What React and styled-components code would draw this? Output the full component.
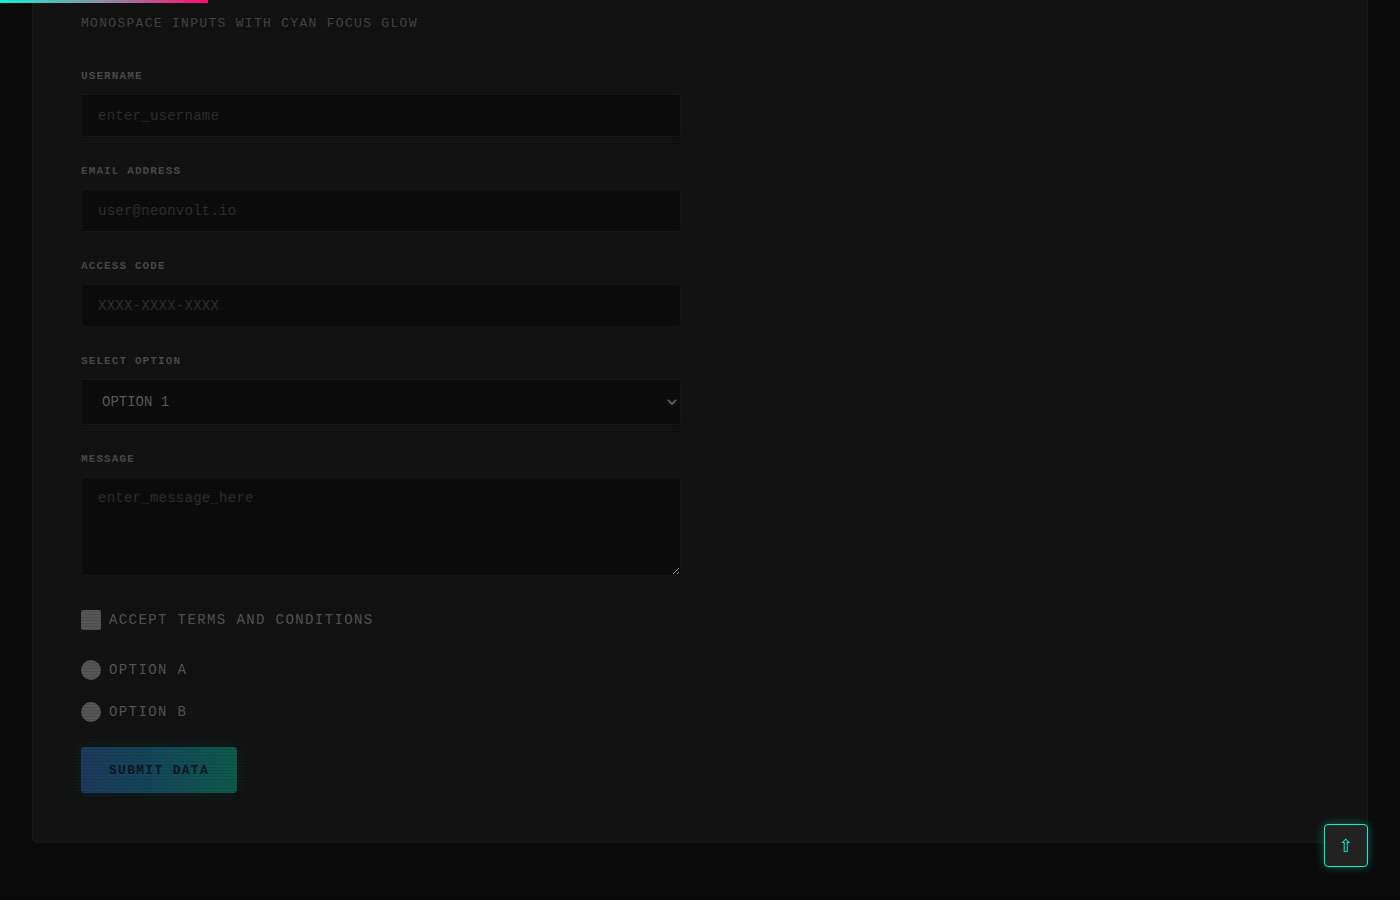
import React from "react";
import styled, { createGlobalStyle } from "styled-components";

const GlobalStyle = createGlobalStyle`
  html, body {
    margin: 0;
    padding: 0;
    background: #0b0b0b;
  }
  body {
    font-family: "Liberation Mono", "DejaVu Sans Mono", monospace;
  }
`;

const Scanlines = styled.div`
  position: fixed;
  inset: 0;
  pointer-events: none;
  z-index: 5;
  background: repeating-linear-gradient(
    0deg,
    rgba(0, 0, 0, 0.1) 0px,
    rgba(0, 0, 0, 0.1) 1px,
    transparent 1px,
    transparent 3px
  );
`;

const ProgressBar = styled.div`
  position: fixed;
  top: 0;
  left: 0;
  height: 3px;
  width: 208px;
  z-index: 10;
  background: linear-gradient(90deg, #12f0cc 0%, #8d8fa6 50%, #ff0a6c 100%);
`;

const Page = styled.div`
  padding: 0 32px 58px;
`;

const Card = styled.section`
  background: #121212;
  border: 1px solid #1a1a1a;
  border-top: none;
  border-radius: 0 0 6px 6px;
  padding: 16px 48px 49px;
`;

const Subtitle = styled.p`
  margin: 0 0 38px;
  font-size: 13px;
  line-height: 16px;
  letter-spacing: 0.1em;
  color: #454545;
  text-transform: uppercase;
`;

const Form = styled.form`
  max-width: 600px;
  display: flex;
  flex-direction: column;
`;

const Field = styled.div`
  display: flex;
  flex-direction: column;
  margin-bottom: ${(p) => (p.$last ? 0 : 28)}px;
`;

const Label = styled.label`
  font-size: 11px;
  line-height: 13px;
  font-weight: 700;
  letter-spacing: 0.1em;
  color: #4a4a4a;
  text-transform: uppercase;
  margin-bottom: 11px;
`;

const inputBase = `
  box-sizing: border-box;
  width: 100%;
  background: #0c0c0c;
  border: 1px solid #161616;
  border-radius: 3px;
  color: #5a5a5a;
  font-family: "Liberation Mono", "DejaVu Sans Mono", monospace;
  font-size: 14px;
  letter-spacing: 0.25px;
  outline: none;
  &::placeholder {
    color: #2e2e2e;
  }
`;

const Input = styled.input`
  ${inputBase}
  height: 43px;
  padding: 12px 16px;
  line-height: 17px;
`;

const Select = styled.select`
  ${inputBase}
  height: 46px;
  padding: 0 12px 0 16px;
  letter-spacing: 0;
  text-transform: uppercase;
`;

const TextArea = styled.textarea`
  ${inputBase}
  height: 99px;
  padding: 12px 16px;
  line-height: 17px;
  resize: vertical;
`;

const CheckRow = styled.label`
  display: flex;
  align-items: center;
  gap: 8px;
  font-size: 14px;
  line-height: 19px;
  letter-spacing: 0.1em;
  color: #555555;
  text-transform: uppercase;
  margin-top: ${(p) => p.$top}px;
`;

const Box = styled.span`
  width: 20px;
  height: 20px;
  flex: none;
  background: #555555;
  border-radius: ${(p) => (p.$round ? "50%" : "2px")};
`;

const SubmitButton = styled.button`
  align-self: flex-start;
  margin-top: 25px;
  width: 156px;
  height: 46px;
  border: none;
  border-radius: 4px;
  background: linear-gradient(90deg, #1d3a5d 0%, #13485a 50%, #0e5a4b 100%);
  box-shadow: 0 0 18px rgba(20, 160, 150, 0.12);
  color: #0c1820;
  font-family: "Liberation Mono", "DejaVu Sans Mono", monospace;
  font-size: 13px;
  font-weight: 700;
  letter-spacing: 0.1em;
  text-transform: uppercase;
  cursor: pointer;
`;

const ScrollTop = styled.button`
  position: fixed;
  right: 32px;
  bottom: 33px;
  width: 44px;
  height: 43px;
  z-index: 10;
  background: #222222;
  border: 1px solid #10f0cf;
  border-radius: 4px;
  box-shadow: 0 0 10px rgba(16, 240, 207, 0.35);
  color: #10f0cf;
  font-size: 18px;
  line-height: 1;
  display: flex;
  align-items: center;
  justify-content: center;
  padding: 0;
  cursor: pointer;
  font-family: "DejaVu Sans", sans-serif;
`;

const fields = [
  { id: "username", label: "Username", placeholder: "enter_username" },
  { id: "email", label: "Email Address", placeholder: "user@neonvolt.io" },
  { id: "code", label: "Access Code", placeholder: "XXXX-XXXX-XXXX" },
];

export default function App() {
  return (
    <>
      <GlobalStyle />
      <ProgressBar />
      <Page>
        <Card>
          <Subtitle>Monospace inputs with cyan focus glow</Subtitle>
          <Form onSubmit={(e) => e.preventDefault()}>
            {fields.map((f) => (
              <Field key={f.id}>
                <Label htmlFor={f.id}>{f.label}</Label>
                <Input id={f.id} placeholder={f.placeholder} />
              </Field>
            ))}
            <Field>
              <Label htmlFor="select">Select Option</Label>
              <Select id="select" defaultValue="1">
                <option value="1">Option 1</option>
                <option value="2">Option 2</option>
                <option value="3">Option 3</option>
              </Select>
            </Field>
            <Field $last>
              <Label htmlFor="message">Message</Label>
              <TextArea id="message" placeholder="enter_message_here" />
            </Field>
            <CheckRow $top={34}>
              <Box />
              Accept terms and conditions
            </CheckRow>
            <CheckRow $top={30}>
              <Box $round />
              Option A
            </CheckRow>
            <CheckRow $top={22}>
              <Box $round />
              Option B
            </CheckRow>
            <SubmitButton type="submit">Submit Data</SubmitButton>
          </Form>
        </Card>
      </Page>
      <Scanlines />
      <ScrollTop aria-label="Scroll to top">⇧</ScrollTop>
    </>
  );
}
